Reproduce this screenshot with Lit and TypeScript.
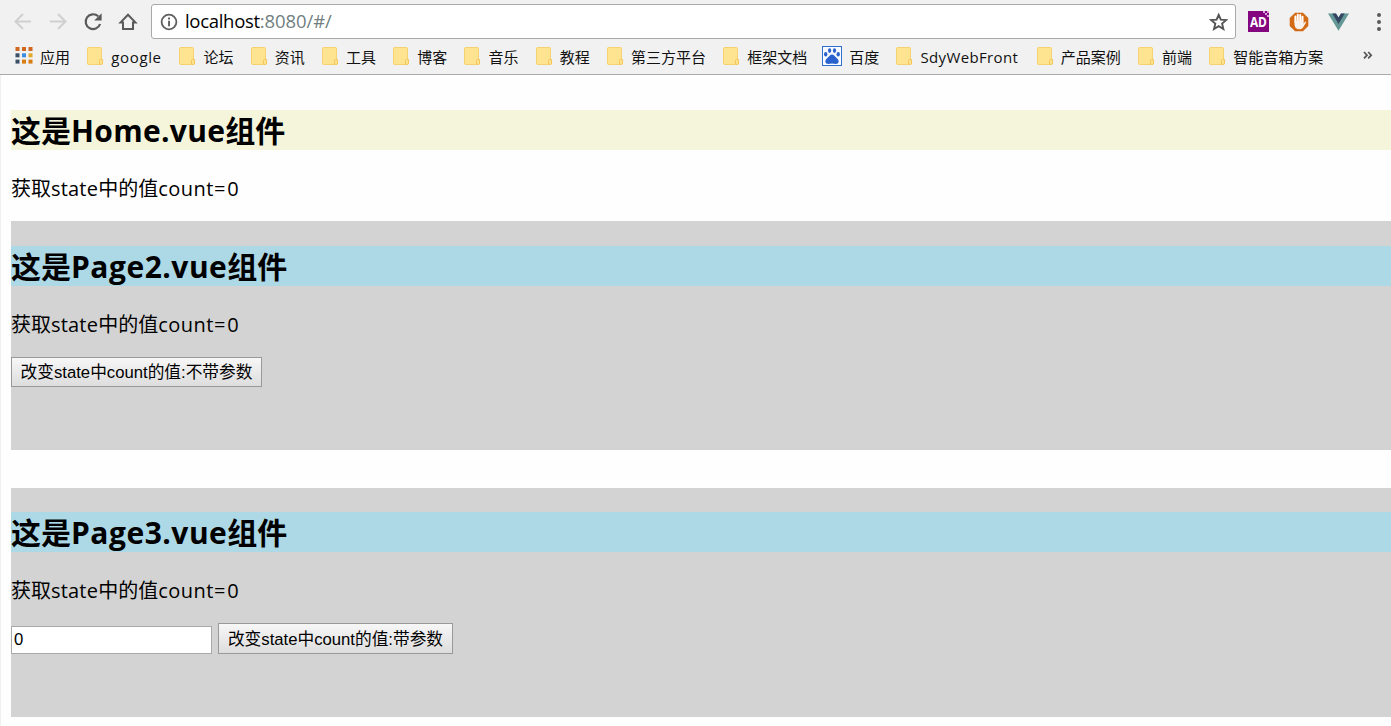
import { LitElement, html, css, svg } from "lit";
import { customElement, property } from "lit/decorators.js";
import { styleMap } from "lit/directives/style-map.js";

type Run = [text: string, spacing?: number];
type Bookmark = { label: string; width: number; kind?: string; spacing?: number };

const runs = (parts: Run[]) =>
  parts.map(([t, s]) => (s ? html`<span style=${styleMap({ letterSpacing: `${s}px` })}>${t}</span>` : t));

const bookmarks: Bookmark[] = [
  { label: "google", width: 51, spacing: 0.65 },
  { label: "论坛", width: 30 },
  { label: "资讯", width: 30 },
  { label: "工具", width: 30 },
  { label: "博客", width: 30 },
  { label: "音乐", width: 30 },
  { label: "教程", width: 30 },
  { label: "第三方平台", width: 75 },
  { label: "框架文档", width: 60 },
  { label: "百度", width: 30, kind: "paw" },
  { label: "SdyWebFront", width: 99, spacing: 0.35 },
  { label: "产品案例", width: 60 },
  { label: "前端", width: 30 },
  { label: "智能音箱方案", width: 90 },
];

const folder = html`<svg class="folder" width="16" height="18" viewBox="0 0 16 18">
  <path d="M1.5.5H13.5Q14.5.5 14.5 1.5V12.5H15.5V16Q15.5 17.5 14 17.5H1.5Q.5 17.5.5 16.5V1.5Q.5.5 1.5.5Z" fill="#fee391" stroke="#f6d171"/>
  <path d="M12.5 17V13.5Q12.5 12.5 13.5 12.5H15.5V16Q15.5 17.5 14 17.5Z" fill="#fee391" stroke="#f3c75d"/>
</svg>`;

const paw = html`<svg class="paw" width="20" height="20" viewBox="0 0 20 20">
  <rect x=".5" y=".5" width="19" height="19" fill="#f7fbff" stroke="#2f6fd0"/>
  <g fill="#2962cf">
    <ellipse cx="7.6" cy="4.6" rx="1.6" ry="2.4"/>
    <ellipse cx="12.5" cy="4.6" rx="1.6" ry="2.4"/>
    <ellipse cx="3.7" cy="8.2" rx="1.7" ry="2.2"/>
    <ellipse cx="16.2" cy="8.2" rx="1.7" ry="2.2"/>
    <path d="M10 8.4C12 8.4 12.9 10.4 14.4 11.7C16.4 13.4 17.2 14.8 16.3 16.8C15.1 18.7 12.3 17.6 10 17.6S4.9 18.7 3.7 16.8C2.8 14.8 3.6 13.4 5.6 11.7C7.1 10.4 8 8.4 10 8.4Z"/>
  </g>
</svg>`;

const appColors = ["#d0661f", "#d0661f", "#d0661f", "#3c5068", "#3b8ce0", "#e0a92d", "#3c5068", "#d97d12", "#d97d12"];

@customElement("browser-bar")
class BrowserBar extends LitElement {
  static styles = css`
    :host { display: flex; flex-direction: column; height: 75px; box-sizing: border-box; background: #f1f1f1; border-bottom: 1px solid #ababab; padding-top: 4px; font-family: "Open Sans", "Noto Sans CJK SC", sans-serif; }
    svg { display: block; flex: none; }
    .row { display: flex; align-items: center; height: 35px; }
    .nav { display: grid; grid-template-columns: repeat(4, 35px); width: 140px; margin: 0 6px 0 5px; justify-items: center; }
    .url { display: flex; align-items: center; box-sizing: border-box; width: 1085px; height: 35px; border: 1px solid #a9a9a9; border-radius: 3px; background: #fff; padding: 0 7px 0 8px; }
    .address { flex: 1; margin-left: 7px; padding-bottom: 2px; font-size: 18.5px; line-height: 30px; letter-spacing: -0.3px; color: #000; white-space: nowrap; }
    .path { color: #71807f; letter-spacing: -0.1px; }
    .ext { display: flex; align-items: center; margin-left: 12px; }
    .hand { margin-left: 20px; }
    .vue { margin-left: 19px; }
    .dots { margin-left: 28px; }
    .marks { display: flex; align-items: center; height: 35px; padding-left: 15px; font-size: 15px; line-height: 24px; color: #111; white-space: nowrap; }
    .mark { display: flex; align-items: center; flex: none; margin-right: 17px; }
    .folder { margin-right: 8.25px; margin-top: -2px; }
    .paw { margin: -1px 7px 0 -2px; }
    .apps { margin-right: 7px; margin-top: -3px; }
    .first { width: 30px; }
    .more { margin-left: 23px; margin-top: -2px; }
  `;
  render() {
    return html`
      <div class="row">
        <div class="nav">
          <svg width="20" height="20" viewBox="0 0 20 20" fill="none" stroke="#d0d0d0" stroke-width="2"><path d="M18 9.5H3M10 2 2.5 9.5 10 17"/></svg>
          <svg width="20" height="20" viewBox="0 0 20 20" fill="none" stroke="#d0d0d0" stroke-width="2"><path d="M2 9.5H17M10 2 17.5 9.5 10 17"/></svg>
          <svg width="20" height="20" viewBox="0 0 20 20"><path d="M15.2 4.3A7.4 7.4 0 1 0 17.1 12" fill="none" stroke="#5a5a5a" stroke-width="2.2"/><path d="M18.6 1.2V8.5H11.2Z" fill="#5a5a5a"/></svg>
          <svg width="20" height="20" viewBox="0 0 20 20" fill="none" stroke="#5a5a5a" stroke-width="2"><path d="M2.6 10.4H5V17H15V10.4H17.4L10 2.8Z"/></svg>
        </div>
        <div class="url">
          <svg width="18" height="18" viewBox="0 0 18 18"><circle cx="9" cy="9" r="7.4" fill="none" stroke="#5f5f5f" stroke-width="1.8"/><path d="M8.1 7.8H10V13.2H8.1ZM8.1 4.6H10V6.5H8.1Z" fill="#5f5f5f"/></svg>
          <div class="address">localhost<span class="path">:8080/#/</span></div>
          <svg width="19" height="18" viewBox="0 0 19 18"><path d="M9.7 1.8 11.8 6.6 17.2 7.1 13.1 10.6 14.4 16 9.7 13.1 5 16 6.3 10.6 2.2 7.1 7.6 6.6Z" fill="none" stroke="#555" stroke-width="1.9"/></svg>
        </div>
        <div class="ext">
          <svg width="21" height="21" viewBox="0 0 21 21"><rect width="21" height="21" fill="#84067f"/><path d="M15 0h6v6h-2v-2h-2v-2h-2z" fill="#d9a5d8"/><path d="M17 0h2v2h-2zM19 2h2v2h-2z" fill="#84067f"/><text x="10.4" y="16.2" text-anchor="middle" textLength="17" lengthAdjust="spacingAndGlyphs" font-family="Open Sans, sans-serif" font-weight="700" font-size="14.5" fill="#fff">AD</text></svg>
          <svg class="hand" width="20" height="20" viewBox="0 0 20 20"><path d="M6 .7H14L19.3 6V14L14 19.3H6L.7 14V6Z" fill="#d36b16"/><g stroke="#fff" stroke-width="2" stroke-linecap="round" fill="none"><path d="M6.4 10V4.6M8.8 9V2.8M11.2 9V3M13.5 10V4.8"/></g><path d="M5.5 8.7H14.4V11.4L16.5 9.4Q17.7 9.4 16.9 10.7L13.7 16Q12.6 17.3 10.5 17.3Q5.5 17.2 5.5 12Z" fill="#f8f2ec"/></svg>
          <svg class="vue" width="21" height="18" viewBox="0 0 21 18"><path d="M0 .5H8L10.5 4.6 13 .5H21L10.5 17.8Z" fill="#649795"/><path d="M4.3.5H8L10.5 4.6 13 .5H16.7L10.5 11Z" fill="#354660"/></svg>
          <svg class="dots" width="4" height="18" viewBox="0 0 4 18" fill="#5a5a5a"><circle cx="2" cy="2" r="2"/><circle cx="2" cy="9" r="2"/><circle cx="2" cy="16" r="2"/></svg>
        </div>
      </div>
      <div class="marks">
        <div class="mark">
          <svg class="apps" width="18" height="17" viewBox="0 0 18 17">
            ${appColors.map((c, i) => svg`<rect x=${(i % 3) * 6.5 + 0.5} y=${Math.floor(i / 3) * 6.3} width="4" height="4" fill=${c}/>`)}
          </svg>
          <span class="first">应用</span>
        </div>
        ${bookmarks.map((b) => html`<div class="mark">${b.kind === "paw" ? paw : folder}<span style=${styleMap({ width: `${b.width}px`, letterSpacing: `${b.spacing ?? 0}px` })}>${b.label}</span></div>`)}
        <svg class="more" width="10" height="9" viewBox="0 0 10 9" fill="none" stroke="#555" stroke-width="1.7"><path d="M1 1 4 4.2 1 7.4M5.2 1 8.2 4.2 5.2 7.4"/></svg>
      </div>`;
  }
}

@customElement("count-section")
class CountSection extends LitElement {
  @property({ attribute: false }) name: Run = ["", 0];
  @property() tone = "blue";
  static styles = css`
    :host { display: block; font-family: "Open Sans", "Noto Sans CJK SC", sans-serif; color: #000; }
    h1 { margin: 0; height: 40px; line-height: 41px; font-size: 30px; font-weight: 700; white-space: nowrap; }
    .beige { background: #f5f5dc; }
    .blue { background: #add8e6; }
    p { margin: 24px 0 0; height: 30px; line-height: 29px; font-size: 20px; white-space: nowrap; }
  `;
  render() {
    return html`<h1 class=${this.tone}>${runs([["这是"], this.name, ["组件"]])}</h1>
      <p>${runs([["获取"], ["state", 0.2], ["中的值"], ["count", 0.5], ["=0", 1.8]])}</p>
      <slot></slot>`;
  }
}

@customElement("app-root")
class AppRoot extends LitElement {
  static styles = css`
    :host { display: block; height: 726px; overflow: hidden; background: #fefefe; }
    main { box-sizing: border-box; height: 651px; border-left: 1px solid #f0f0f0; padding: 35px 0 0 10px; }
    .panel { box-sizing: border-box; height: 229px; background: #d3d3d3; }
    .second { margin-top: 17px; padding-top: 25px; }
    .third { margin-top: 38px; padding-top: 24px; }
    .controls { display: flex; align-items: flex-end; margin-top: 17px; gap: 6px; }
    button, input { box-sizing: border-box; margin: 0; font-family: "Liberation Sans", "Noto Sans CJK SC", sans-serif; font-size: 16.7px; color: #000; border-radius: 0; }
    button { height: 30px; width: 251px; padding: 2px 0 0; border: 1px solid #999; background: linear-gradient(#f7f7f7, #dddddd); line-height: 26px; white-space: nowrap; }
    .with-value { width: 235px; height: 31px; }
    input { width: 201px; height: 28px; border: 1px solid #a9a9a9; background: #fff; padding: 0 1px 0 2px; }
  `;
  render() {
    return html`
      <browser-bar></browser-bar>
      <main>
        <count-section tone="beige" .name=${["Home.vue", 0.3] as Run}></count-section>
        <div class="panel second">
          <count-section .name=${["Page2.vue", 0.5] as Run}>
            <div class="controls"><button>改变state中count的值:不带参数</button></div>
          </count-section>
        </div>
        <div class="panel third">
          <count-section .name=${["Page3.vue", 0.5] as Run}>
            <div class="controls"><input .value=${"0"} /><button class="with-value">改变state中count的值:带参数</button></div>
          </count-section>
        </div>
      </main>`;
  }
}
